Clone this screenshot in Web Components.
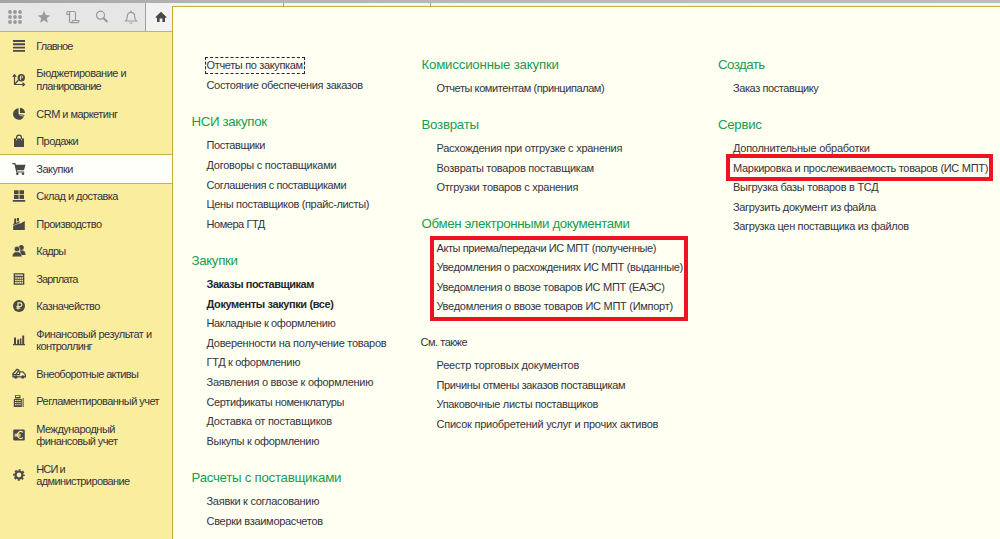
<!DOCTYPE html>
<html lang="ru">
<head>
<meta charset="utf-8">
<title>Закупки</title>
<style>
html,body{margin:0;height:100%;overflow:hidden}
body{font-family:"Liberation Sans",Arial,sans-serif;font-size:11px;color:#333340}
</style>
</head>
<body>
<app-shell>
  <tool-bar slot="tools"></tool-bar>
  <side-item slot="nav" icon="list"><fit-text w="37">Главное</fit-text></side-item>
  <side-item slot="nav" icon="plan" two><fit-text w="90.3">Бюджетирование и</fit-text><fit-text w="65.3">планирование</fit-text></side-item>
  <side-item slot="nav" icon="pie"><fit-text w="81.7">CRM и маркетинг</fit-text></side-item>
  <side-item slot="nav" icon="bag"><fit-text w="42.3">Продажи</fit-text></side-item>
  <side-item slot="nav" icon="cart" selected><fit-text w="37">Закупки</fit-text></side-item>
  <side-item slot="nav" icon="stock"><fit-text w="83">Склад и доставка</fit-text></side-item>
  <side-item slot="nav" icon="factory"><fit-text w="65.7">Производство</fit-text></side-item>
  <side-item slot="nav" icon="people"><fit-text w="30">Кадры</fit-text></side-item>
  <side-item slot="nav" icon="calc"><fit-text w="43">Зарплата</fit-text></side-item>
  <side-item slot="nav" icon="ruble"><fit-text w="64">Казначейство</fit-text></side-item>
  <side-item slot="nav" icon="bars" two><fit-text w="115.7">Финансовый результат и</fit-text><fit-text w="56.3">контроллинг</fit-text></side-item>
  <side-item slot="nav" icon="truck"><fit-text w="102.7">Внеоборотные активы</fit-text></side-item>
  <side-item slot="nav" icon="register"><fit-text w="123.3">Регламентированный учет</fit-text></side-item>
  <side-item slot="nav" icon="euro" two><fit-text w="79">Международный</fit-text><fit-text w="81.7">финансовый учет</fit-text></side-item>
  <side-item slot="nav" icon="gear" two><fit-text w="29.3">НСИ и</fit-text><fit-text w="93.7">администрирование</fit-text></side-item>

  <menu-column slot="menu" style="padding-top:6.7px">
    <menu-group>
      <menu-link focused><fit-text w="96">Отчеты по закупкам</fit-text></menu-link>
      <menu-link><fit-text w="156.7">Состояние обеспечения заказов</fit-text></menu-link>
    </menu-group>
    <menu-group>
      <fit-text slot="head" w="74.7">НСИ закупок</fit-text>
      <menu-link><fit-text w="58.7">Поставщики</fit-text></menu-link>
      <menu-link><fit-text w="130">Договоры с поставщиками</fit-text></menu-link>
      <menu-link><fit-text w="140">Соглашения с поставщиками</fit-text></menu-link>
      <menu-link><fit-text w="162.3">Цены поставщиков (прайс-листы)</fit-text></menu-link>
      <menu-link><fit-text w="59.3">Номера ГТД</fit-text></menu-link>
    </menu-group>
    <menu-group>
      <fit-text slot="head" w="46">Закупки</fit-text>
      <menu-link strong><fit-text w="107.7">Заказы поставщикам</fit-text></menu-link>
      <menu-link strong><fit-text w="127.7">Документы закупки (все)</fit-text></menu-link>
      <menu-link><fit-text w="129">Накладные к оформлению</fit-text></menu-link>
      <menu-link><fit-text w="180.3">Доверенности на получение товаров</fit-text></menu-link>
      <menu-link><fit-text w="93.7">ГТД к оформлению</fit-text></menu-link>
      <menu-link><fit-text w="166.7">Заявления о ввозе к оформлению</fit-text></menu-link>
      <menu-link><fit-text w="138">Сертификаты номенклатуры</fit-text></menu-link>
      <menu-link><fit-text w="125.7">Доставка от поставщиков</fit-text></menu-link>
      <menu-link><fit-text w="112.7">Выкупы к оформлению</fit-text></menu-link>
    </menu-group>
    <menu-group>
      <fit-text slot="head" w="148.5">Расчеты с поставщиками</fit-text>
      <menu-link><fit-text w="112.7">Заявки к согласованию</fit-text></menu-link>
      <menu-link><fit-text w="116.7">Сверки взаиморасчетов</fit-text></menu-link>
    </menu-group>
  </menu-column>

  <menu-column slot="menu">
    <menu-group>
      <fit-text slot="head" w="136">Комиссионные закупки</fit-text>
      <menu-link><fit-text w="167.5">Отчеты комитентам (принципалам)</fit-text></menu-link>
    </menu-group>
    <menu-group>
      <fit-text slot="head" w="56">Возвраты</fit-text>
      <menu-link><fit-text w="186">Расхождения при отгрузке с хранения</fit-text></menu-link>
      <menu-link><fit-text w="157">Возвраты товаров поставщикам</fit-text></menu-link>
      <menu-link><fit-text w="142">Отгрузки товаров с хранения</fit-text></menu-link>
    </menu-group>
    <menu-group>
      <fit-text slot="head" w="208">Обмен электронными документами</fit-text>
      <red-frame style="--w:258px;--h:85px;--t:-2.3px">
        <menu-link><fit-text w="219.3">Акты приема/передачи ИС МПТ (полученные)</fit-text></menu-link>
        <menu-link><fit-text w="246">Уведомления о расхождениях ИС МПТ (выданные)</fit-text></menu-link>
        <menu-link><fit-text w="227.7">Уведомления о ввозе товаров ИС МПТ (ЕАЭС)</fit-text></menu-link>
        <menu-link><fit-text w="236">Уведомления о ввозе товаров ИС МПТ (Импорт)</fit-text></menu-link>
      </red-frame>
    </menu-group>
    <menu-group plain>
      <fit-text slot="head" w="47">См. также</fit-text>
      <menu-link><fit-text w="143">Реестр торговых документов</fit-text></menu-link>
      <menu-link><fit-text w="188.5">Причины отмены заказов поставщикам</fit-text></menu-link>
      <menu-link><fit-text w="162">Упаковочные листы поставщиков</fit-text></menu-link>
      <menu-link><fit-text w="222">Список приобретений услуг и прочих активов</fit-text></menu-link>
    </menu-group>
  </menu-column>

  <menu-column slot="menu">
    <menu-group>
      <fit-text slot="head" w="47.3">Создать</fit-text>
      <menu-link><fit-text w="86.3">Заказ поставщику</fit-text></menu-link>
    </menu-group>
    <menu-group>
      <fit-text slot="head" w="44.3">Сервис</fit-text>
      <menu-link><fit-text w="136.7">Дополнительные обработки</fit-text></menu-link>
      <red-frame style="--w:267px;--h:27px;--t:-4.4px">
        <menu-link><fit-text w="254.7">Маркировка и прослеживаемость товаров (ИС МПТ)</fit-text></menu-link>
      </red-frame>
      <menu-link><fit-text w="146.3">Выгрузка базы товаров в ТСД</fit-text></menu-link>
      <menu-link><fit-text w="144">Загрузить документ из файла</fit-text></menu-link>
      <menu-link><fit-text w="176.3">Загрузка цен поставщика из файлов</fit-text></menu-link>
    </menu-group>
  </menu-column>
</app-shell>

<script>
const INK = '#484848';
const ICONS = {
  list: '<path d="M1 2h12M1 5.3h12M1 8.6h12M1 11.9h12" stroke="#484848" stroke-width="1.9"/>',
  plan: '<path d="M2.5 2v9.5H12M.8 3.8 2.5 1.8l1.7 2M10.5 9.8l2 1.7-2 1.7M2.5 11.5l4-4.5" fill="none" stroke="#484848" stroke-width="1.2"/><circle cx="9.3" cy="4.7" r="3.7"/><path d="M8.5 7V3h1.3a1 1 0 0 1 0 2H7.5" fill="none" stroke="#fbed9e" stroke-width=".8"/>',
  pie: '<path d="M6.6 1.2A5.8 5.8 0 1 0 12.5 8L6.6 7z"/><path d="M8 .8A5.6 5.6 0 0 1 13 6H8z"/><path d="M7 7.6l5.5 2" stroke="#fbed9e" stroke-width=".7"/>',
  bag: '<path d="M2 4.5h10V13H2z"/><path d="M4.5 6V4a2.5 2.8 0 0 1 5 0v2" fill="none" stroke="#484848" stroke-width="1.2"/><path d="M4.5 5v1.5M9.5 5v1.5" stroke="#fbed9e" stroke-width=".7"/>',
  cart: '<path d="M3.2 2.8H13.5L12 8.2H4.4z"/><path d="M.3 1.6h2.6L4.8 10h7.4" fill="none" stroke="#484848" stroke-width="1.2"/><circle cx="5.3" cy="11.8" r="1.3"/><circle cx="11" cy="11.8" r="1.3"/>',
  stock: '<path d="M2 1.2h4.6v4H2zM7.5 1.2H12v4H7.5zM2 6.1h4.6v4H2zM7.5 6.1H12v4H7.5zM.8 11h12.4v1.8H.8z"/>',
  factory: '<path d="M1.2 13V7l1-.8V1.5h2V6l3.2-2v3L12.8 4v9z"/><path d="M5 1h2v2.4l-2 1z"/><path d="M1.2 8.7l6-2.6" stroke="#fbed9e" stroke-width=".6"/>',
  people: '<circle cx="9.3" cy="3.4" r="2.5"/><path d="M8 6.5c3-.6 5.6.7 5.6 4.4H9z"/><circle cx="5" cy="5" r="2.8" stroke="#fbed9e" stroke-width=".6"/><path d="M.3 12.8c0-3 1.5-4.6 3.3-4.8h3c2 .3 3.2 1.8 3.2 4.8z" stroke="#fbed9e" stroke-width=".4"/>',
  calc: '<path d="M1.7 1.2h10.6v11.6H1.7z"/><path d="M3 2.5h8v1.3H3z" fill="#fbed9e"/><path d="M3.2 6h7.8M3.2 8.4h7.8M3.2 10.8h7.8" stroke="#fbed9e" stroke-width="1.5" stroke-dasharray="1.6 .5"/>',
  ruble: '<circle cx="7" cy="7" r="6"/><path d="M6 10.6V3.9h2.1a1.7 1.7 0 0 1 0 3.6H4.4M4.4 9.1h4" fill="none" stroke="#fbed9e" stroke-width="1.2"/>',
  bars: '<path d="M1 11h12v1.3H1zM2 4.5h2V11H2zM5.2 6.5H7V11H5.2zM7.8 5.5h1.6V11H7.8zM10.2 2.4h2V11h-2z"/>',
  truck: '<path d="M.3 7.5 5 2.3l2 1-3.4 4.5M1 9.8V7.6h6.5V4.9h3.3l2.5 2.5v2.4z" fill="none" stroke="#484848" stroke-width="1.3"/><circle cx="3.8" cy="10" r="1.7"/><circle cx="10.8" cy="10" r="1.7"/>',
  register: '<path d="M1.8 5h8v8h-8zM3 1.2h5.5V4.4H3zM10.6 4h1v9h-1z"/><path d="M4 2.5h3.4M3 6.5h5.7M3 8.7h5.7M3 10.8h5.7" stroke="#fbed9e" stroke-width="1" /><path d="M4.8 5v8M6.8 5v8" stroke="#484848" stroke-width=".6"/>',
  euro: '<rect x="1.2" y="1.4" width="11.6" height="11.2" rx="1.3"/><path d="M11 4.4A3.4 3.4 0 1 0 11 9.6M2.6 6.2h6M2.6 7.9h6" fill="none" stroke="#fbed9e" stroke-width="1.1"/>',
  gear: '<circle cx="7" cy="7" r="3.5" fill="none" stroke="#484848" stroke-width="2.2"/><circle cx="7" cy="7" r="5" fill="none" stroke="#484848" stroke-width="1.7" stroke-dasharray="2 1.93" stroke-dashoffset="1"/>'
};
const define = (name, html, ready) => {
  const t = document.createElement('template');
  t.innerHTML = html;
  customElements.define(name, class extends HTMLElement {
    constructor() {
      super();
      this.attachShadow({ mode: 'open' }).append(t.content.cloneNode(true));
    }
    connectedCallback() { if (ready) ready.call(this, this.shadowRoot); }
  });
};

define('app-shell', `<style>
  :host{display:grid;grid-template:3px 28px 1fr/172px 1fr;width:1000px;height:539px;background:#f4f4f6;overflow:hidden}
  .strip{grid-area:1/1/2/3;background:linear-gradient(90deg,#a4a4a4,#b4b4b4 20%,#bebebe)}
  .tools{grid-area:2/1/3/2}
  nav{grid-area:3/1/4/2;background:#fbed9e;border-top:1px solid #b5b098;padding-top:.5px;box-sizing:border-box}
  .tabs{grid-area:2/2/3/3;display:flex;height:3px}
  .tabs i{box-sizing:border-box;border-right:1px solid #9c9c9c;width:112px}
  .tabs i+i{width:147px}
  main{grid-area:2/2/4/3;margin-top:3px;background:#fffff2;border:1px solid #c4ae38;border-width:1px 0 0 1px;display:grid;grid-template-columns:230px 296.5px 1fr;padding:42.5px 0 0 18.5px;align-items:start}
</style><div class="strip"></div><div class="tools"><slot name="tools"></slot></div><div class="tabs"><i></i><i></i></div><nav><slot name="nav"></slot></nav><main><slot name="menu"></slot></main>`);

define('tool-bar', `<style>
  :host{display:flex;height:28px;background:#e6e6e6}
  .b{width:29px;display:grid;place-items:center}
  .home{width:27px;box-sizing:border-box;background:#f2f2f2;border-left:1px solid #a0a0a0;display:grid;place-items:center;padding-left:4px}
  svg{display:block}
</style>
<div class="b"><svg width="14" height="14" fill="#999"><circle cx="2" cy="2" r="1.9"/><circle cx="7" cy="2" r="1.9"/><circle cx="12" cy="2" r="1.9"/><circle cx="2" cy="7" r="1.9"/><circle cx="7" cy="7" r="1.9"/><circle cx="12" cy="7" r="1.9"/><circle cx="2" cy="12" r="1.9"/><circle cx="7" cy="12" r="1.9"/><circle cx="12" cy="12" r="1.9"/></svg></div>
<div class="b"><svg width="14" height="14" fill="#999"><path d="M7 .8l1.7 4.3 4.6.3-3.6 2.9 1.2 4.5L7 10.3l-3.9 2.5 1.2-4.5L.7 5.400l4.6-.3z"/></svg></div>
<div class="b"><svg width="14" height="14" fill="none" stroke="#999" stroke-width="1.2"><path d="M3 4.500H1V2.600Q1 1.500 2.500 1.500H8Q9.500 1.500 9.500 3V10.500M3.500 2V11Q3.500 12.600 5 12.600H11.500Q13 12.600 13 10.500H6.500Q6.600 12.600 5 12.600"/></svg></div>
<div class="b"><svg width="14" height="14" fill="none" stroke="#999"><circle cx="5.500" cy="5.200" r="4" stroke-width="1.200"/><path d="M8.600 8.200l3.800 3.800" stroke-width="2.200"/></svg></div>
<div class="b"><svg width="14" height="14" fill="none" stroke="#999" stroke-width="1.200"><path d="M1.500 11Q3.300 9.500 3.300 6.500Q3.300 2.300 7 2.300T10.700 6.500Q10.700 9.500 12.500 11zM7 .5v2M5.500 13h3"/></svg></div>
<div class="home"><svg width="12" height="12" fill="#484848"><path d="M.3 6.300 6 .8l5.700 5.500-.8.8L10 6.400V11H7.400V7.500H4.600V11H2V6.400l-.9.700z"/></svg></div>`);

define('side-item', `<style>
  :host{display:flex;align-items:center;height:27.5px;box-sizing:border-box;padding-left:12px;line-height:12.600px}
  :host([two]){height:40.1px}
  :host([selected]){background:#fffffa;border:solid #c9b445;border-width:1px 0;height:29.5px;margin:-1px 0;position:relative}
  .ic{width:24.300px;height:14px}
  .tx{display:flex;flex-direction:column}
  svg{display:block}
</style><div class="ic"></div><div class="tx"><slot></slot></div>`, function (r) {
  r.querySelector('.ic').innerHTML = `<svg width="14" height="14" fill="${INK}">${ICONS[this.getAttribute('icon')]}</svg>`;
});

define('menu-column', `<style>:host{display:flex;flex-direction:column;gap:11.700px}</style><slot></slot>`);

define('menu-group', `<style>
  :host{display:flex;flex-direction:column}
  .head{display:none;height:29px;align-items:center;font-size:13.300px;color:#1a9c50}
  .head.on{display:flex}
  :host([plain]) .head{font-size:11px;color:inherit;height:27.500px;margin-left:-1px}
  .rows{padding-left:15px}
</style><div class="head"><slot name="head"></slot></div><div class="rows"><slot></slot></div>`, function (r) {
  r.querySelector('.head').classList.toggle('on', !!this.querySelector('[slot=head]'));
});

define('menu-link', `<style>
  :host{display:flex;align-items:center;height:19.600px}
  :host([strong]){font-weight:700;color:#26262c}
  :host([focused]) span{outline:1px dashed #222244;outline-offset:1px}
  span{line-height:13px}
</style><span><slot></slot></span>`);

define('red-frame', `<style>
  :host{display:block;position:relative}
  :host::after{content:"";position:absolute;box-sizing:border-box;left:-6.700px;top:var(--t);width:var(--w);height:var(--h);border:4px solid #ee1320;pointer-events:none}
</style><slot></slot>`);

/* One unbroken line of text, spaced to the width given in its w attribute. */
const pen = document.createElement('canvas').getContext('2d');
define('fit-text', `<style>:host{display:block;white-space:nowrap}</style><slot></slot>`, function () {
  const cs = getComputedStyle(this), text = this.textContent;
  pen.font = `${cs.fontWeight} ${cs.fontSize} ${cs.fontFamily}`;
  const m = pen.measureText(text);
  const ink = m.actualBoundingBoxRight + m.actualBoundingBoxLeft;
  this.style.letterSpacing = ((this.getAttribute('w') - ink) / (text.length - 1)).toFixed(3) + 'px';
});
</script>
</body>
</html>
